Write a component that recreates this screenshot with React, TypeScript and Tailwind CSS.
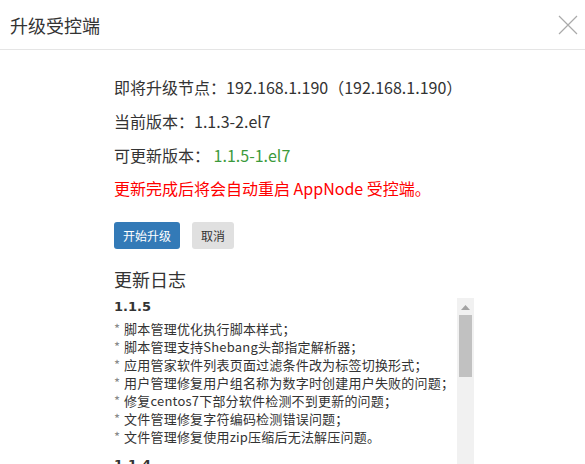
const logs = [
  {
    version: "1.1.5",
    items: [
      "脚本管理优化执行脚本样式；",
      "脚本管理支持Shebang头部指定解析器；",
      "应用管家软件列表页面过滤条件改为标签切换形式；",
      "用户管理修复用户组名称为数字时创建用户失败的问题；",
      "修复centos7下部分软件检测不到更新的问题；",
      "文件管理修复字符编码检测错误问题；",
      "文件管理修复使用zip压缩后无法解压问题。",
    ],
  },
  {
    version: "1.1.4",
    items: ["修复若干已知问题。"],
  },
];

export default function App() {
  return (
    <div
      className="h-[464px] w-[585px] overflow-hidden bg-white text-[#333]"
      style={{ fontFamily: '"Noto Sans CJK SC", "Liberation Sans", sans-serif' }}
    >
      <div className="flex h-[50px] items-center justify-between border-b border-[#e5e5e5] pl-[10px] pr-[5px]">
        <h4 className="text-[18px] leading-none">升级受控端</h4>
        <button className="flex h-[24px] w-[24px] items-center justify-center text-[#aaa]">
          <svg width="20" height="20" viewBox="0 0 20 20" fill="none" stroke="currentColor" strokeWidth="1.2">
            <path d="M1 1L19 19M19 1L1 19" />
          </svg>
        </button>
      </div>

      <div className="pl-[114px] pr-[111px] pt-[26px]">
        <p className="text-[16px] leading-[22px]">即将升级节点：192.168.1.190（192.168.1.190）</p>
        <p className="mt-[12px] text-[16px] leading-[22px]">当前版本：1.1.3-2.el7</p>
        <p className="mt-[12px] text-[16px] leading-[22px]">
          可更新版本： <span className="text-[#3c9a3c]">1.1.5-1.el7</span>
        </p>
        <p className="mt-[11px] text-[16px] leading-[22px] text-[#ff0000]">
          更新完成后将会自动重启 AppNode 受控端。
        </p>

        <div className="mt-[23px] flex gap-[12px]">
          <button className="h-[27px] rounded-[3px] bg-[#337ab7] px-[9px] text-[12px] text-white">
            开始升级
          </button>
          <button className="h-[27px] rounded-[3px] bg-[#e0e0e0] px-[9px] text-[12px] text-[#333]">
            取消
          </button>
        </div>

        <h4 className="mt-[18px] text-[18px] leading-[24px]">更新日志</h4>

        <div className="mt-[7px] flex h-[170px]">
          <div className="flex-1 overflow-hidden">
            {logs.map((log) => (
              <div key={log.version} className="mb-[10px]">
                <div
                  className="text-[13px] font-bold leading-[18px]"
                  style={{ fontFamily: '"DejaVu Sans", Verdana, sans-serif' }}
                >
                  {log.version}
                </div>
                <ul className="mt-[4px] text-[13px] leading-[18px]">
                  {log.items.map((item) => (
                    <li key={item} className="flex gap-[4px] whitespace-nowrap">
                      <span className="text-[#888]">*</span>
                      <span className="tracking-[0.2px]">{item}</span>
                    </li>
                  ))}
                </ul>
              </div>
            ))}
          </div>
          <div className="flex w-[17px] flex-col items-center bg-[#f1f1f1]">
            <svg width="9" height="5" viewBox="0 0 9 5" className="mt-[7px]">
              <path d="M0 5L4.5 0L9 5Z" fill="#a3a3a3" />
            </svg>
            <div className="mt-[5px] h-[62px] w-[13px] bg-[#c1c1c1]" />
          </div>
        </div>
      </div>
    </div>
  );
}
